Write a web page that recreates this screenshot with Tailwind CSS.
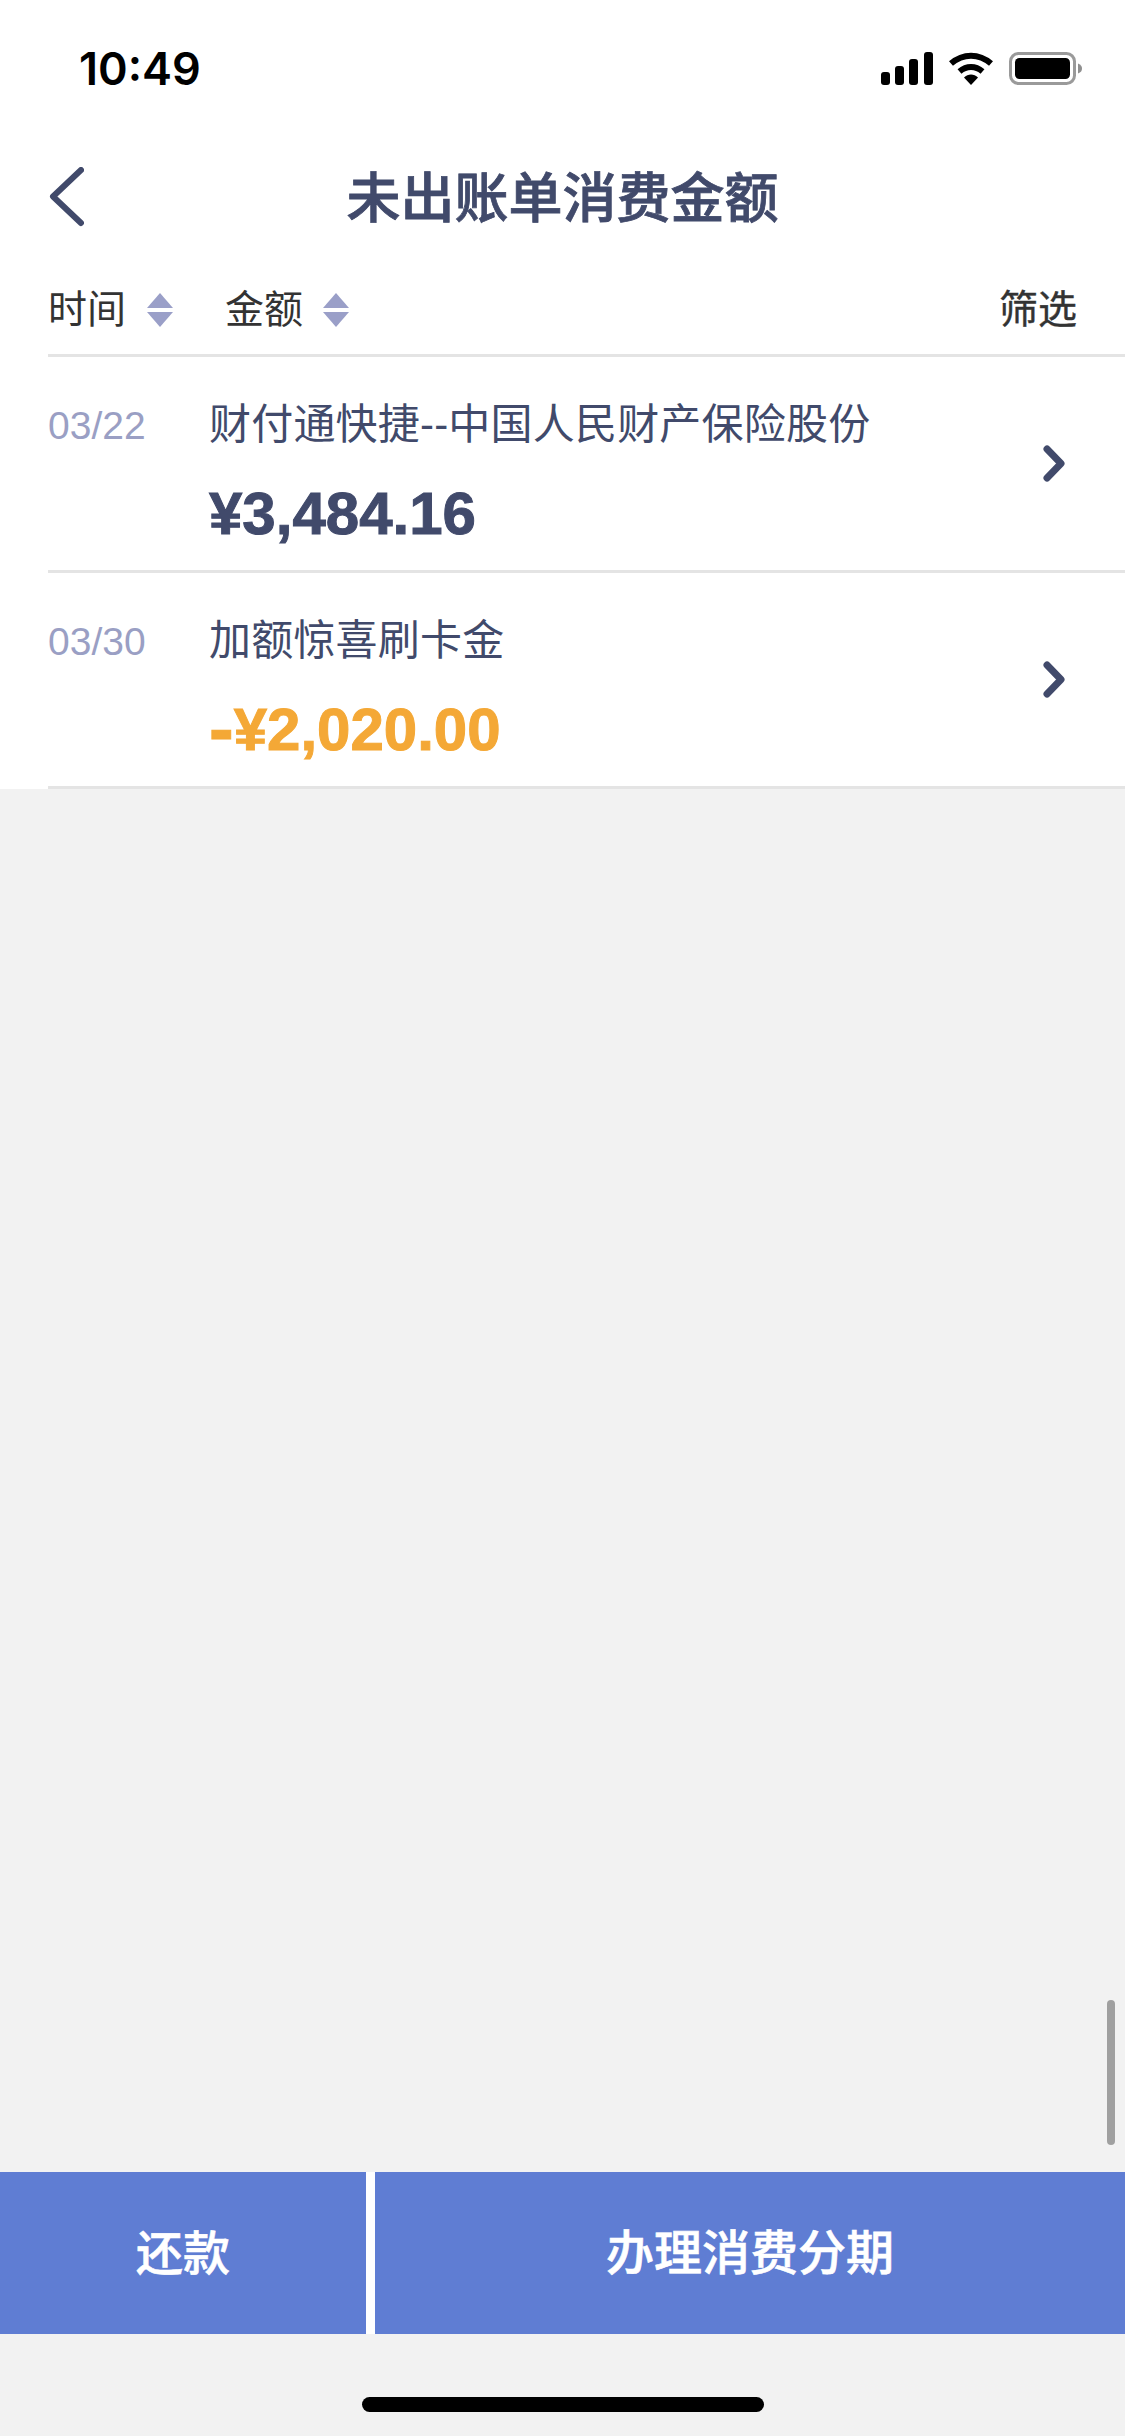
<!DOCTYPE html>
<html lang="zh">
<head>
  <meta charset="UTF-8">
  <title>未出账单消费金额</title>
  <script src="https://cdn.jsdelivr.net/npm/@tailwindcss/browser@4"></script>
</head>
<body class="bg-[#f2f2f2] font-['Liberation_Sans','Noto_Sans_CJK_SC',sans-serif]">
  <div class="relative w-[1125px] h-[2436px] flex flex-col overflow-hidden">
    <div class="bg-white h-[789px] flex flex-col">
      <!-- status bar -->
      <div class="h-[140px] flex justify-between items-start pt-[40px] pl-[79px] pr-[43px] shrink-0">
        <span class="font-['Inter',sans-serif] font-semibold text-[45px] leading-[58px] text-black">10:49</span>
        <div class="flex items-center gap-[15px] pt-[12px]">
          <svg width="52" height="33" viewBox="0 0 52 33" fill="#000"><rect x="0" y="20" width="9" height="13" rx="3"/><rect x="14" y="14" width="9" height="19" rx="3"/><rect x="28" y="7" width="9" height="26" rx="3"/><rect x="43" y="0" width="9" height="33" rx="3"/></svg>
          <svg width="46" height="33" viewBox="0 0 46 33"><path d="M3 11.5C15 1 31 1 43 11.5" fill="none" stroke="#000" stroke-width="6"/><path d="M11.5 19.5C18.5 13.5 27.5 13.5 34.5 19.5" fill="none" stroke="#000" stroke-width="6"/><path d="M16 25.5C20 21.5 26 21.5 30 25.5L23 33Z" fill="#000"/></svg>
          <svg width="73" height="33" viewBox="0 0 73 33"><rect x="1.5" y="1.5" width="64" height="30" rx="8" fill="none" stroke="#9a9a9a" stroke-width="3"/><rect x="6" y="6" width="55" height="21" rx="4.5" fill="#000"/><path d="M69 11.5C72 12.5 73 14.5 73 16.5S72 20.5 69 21.5Z" fill="#8f8f8f"/></svg>
        </div>
      </div>
      <!-- title bar -->
      <div class="relative h-[114px] flex items-center justify-center pt-[3px] shrink-0">
        <svg class="absolute left-[48px] top-[27px]" width="36" height="60" viewBox="0 0 36 60"><path d="M33 3L5 29.5L33 56" fill="none" stroke="#414a6b" stroke-width="6" stroke-linecap="round" stroke-linejoin="round"/></svg>
        <h1 class="text-[54px] leading-[70px] font-medium text-[#414a6b] [-webkit-text-stroke:0.8px_#414a6b]">未出账单消费金额</h1>
      </div>
      <!-- sort and filter -->
      <div class="ml-[48px] h-[103px] border-b-[3px] border-[#e4e4e4] flex items-center pt-[12px] pr-[48px] shrink-0">
        <span class="text-[39px] leading-[50px] text-[#333]">时间</span>
        <svg class="ml-[21px]" width="26" height="34" viewBox="0 0 26 34" fill="#9a9fc8"><path d="M13 0L26 15H0Z"/><path d="M13 34L0 19H26Z"/></svg>
        <span class="ml-[52px] text-[39px] leading-[50px] text-[#333]">金额</span>
        <svg class="ml-[20px]" width="26" height="34" viewBox="0 0 26 34" fill="#9a9fc8"><path d="M13 0L26 15H0Z"/><path d="M13 34L0 19H26Z"/></svg>
        <span class="ml-auto text-[39px] leading-[50px] text-[#333] [-webkit-text-stroke:0.4px_#333]">筛选</span>
      </div>
      <!-- rows -->
      <div class="ml-[48px] h-[216px] border-b-[3px] border-[#e4e4e4] flex shrink-0">
        <div class="w-[161px] pt-[44px] text-[39px] leading-[50px] text-[#9a9fc4]">03/22</div>
        <div class="flex-1 pt-[40px]">
          <div class="text-[42px] leading-[56px] tracking-[0.2px] text-[#414a6b]">财付通快捷--中国人民财产保险股份</div>
          <div class="mt-[26px] h-[70px] text-[60px] leading-[70px] font-bold text-[#414a6b] [-webkit-text-stroke:1px_#414a6b]">¥3,484.16</div>
        </div>
        <div class="flex items-center pr-[60px]">
          <svg width="22" height="37" viewBox="0 0 22 37"><path d="M4 4L18 18.5L4 33" fill="none" stroke="#414a6b" stroke-width="7" stroke-linecap="round" stroke-linejoin="round"/></svg>
        </div>
      </div>
      <div class="ml-[48px] h-[216px] border-b-[3px] border-[#e4e4e4] flex shrink-0">
        <div class="w-[161px] pt-[44px] text-[39px] leading-[50px] text-[#9a9fc4]">03/30</div>
        <div class="flex-1 pt-[40px]">
          <div class="text-[42px] leading-[56px] tracking-[0.2px] text-[#414a6b]">加额惊喜刷卡金</div>
          <div class="mt-[26px] h-[70px] text-[60px] leading-[70px] font-bold text-[#f4a836] [-webkit-text-stroke:1px_#f4a836]"><span class="text-[74px] leading-[0px] align-[-4px]">-</span>¥2,020.00</div>
        </div>
        <div class="flex items-center pr-[60px]">
          <svg width="22" height="37" viewBox="0 0 22 37"><path d="M4 4L18 18.5L4 33" fill="none" stroke="#414a6b" stroke-width="7" stroke-linecap="round" stroke-linejoin="round"/></svg>
        </div>
      </div>
    </div>
    <!-- empty area -->
    <div class="h-[1383px] shrink-0"></div>
    <!-- actions -->
    <div class="h-[162px] flex bg-white shrink-0">
      <button class="w-[366px] bg-[#5f7dd3] pt-[2px] text-white text-[47px] font-medium [-webkit-text-stroke:0.6px_#fff]">还款</button>
      <button class="ml-[9px] flex-1 bg-[#5f7dd3] pt-[2px] text-white text-[48px] font-medium [-webkit-text-stroke:0.6px_#fff]">办理消费分期</button>
    </div>
    <div class="flex-1 flex justify-center pt-[63px]">
      <div class="w-[402px] h-[15px] rounded-full bg-black"></div>
    </div>
    <!-- scroll indicator -->
    <div class="absolute left-[1107px] top-[2000px] w-[8px] h-[145px] rounded-full bg-[#a0a0a0]"></div>
  </div>
</body>
</html>
